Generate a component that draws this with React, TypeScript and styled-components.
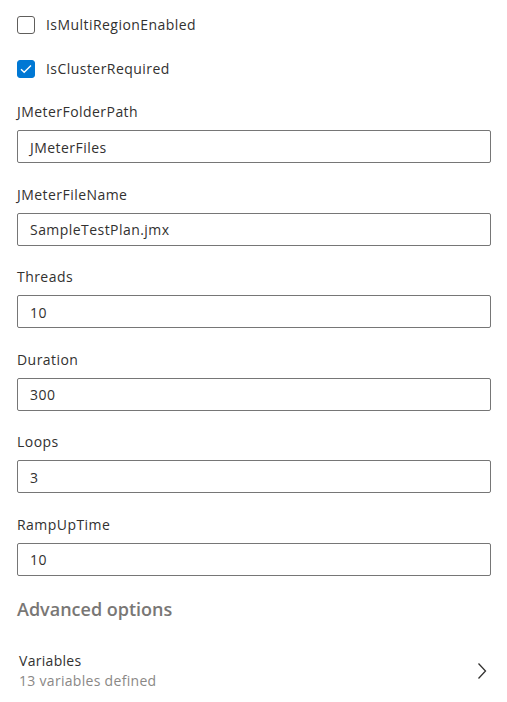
import React from "react";
import styled, { createGlobalStyle } from "styled-components";

const Global = createGlobalStyle`
  html, body { margin: 0; padding: 0; background: #fff; }
  body { font-family: "Segoe UI", "Open Sans", sans-serif; color: #323130; }
  * { box-sizing: border-box; }
`;

const Panel = styled.div`
  width: 507px;
  padding: 15px 16px 0 17px;
  display: flex;
  flex-direction: column;
`;

const Checks = styled.div`
  display: flex;
  flex-direction: column;
  gap: 24px;
  margin-bottom: 22px;
`;

const CheckRow = styled.label`
  display: flex;
  align-items: center;
  gap: 11px;
  height: 20px;
  font-size: 14px;
  line-height: 20px;
  letter-spacing: 0.45px;
`;

const Box = styled.span<{ $checked?: boolean }>`
  width: 18px;
  height: 18px;
  border-radius: 3px;
  border: 1px solid ${(p) => (p.$checked ? "#0078d4" : "#605e5c")};
  background: ${(p) => (p.$checked ? "#0078d4" : "#fff")};
  display: flex;
  align-items: center;
  justify-content: center;
  flex: none;
`;

const Field = styled.div`
  display: flex;
  flex-direction: column;
  margin-bottom: 20.5px;
`;

const Label = styled.div`
  font-size: 14px;
  line-height: 20px;
  padding-top: 1px;
  margin-bottom: 8px;
  letter-spacing: 0.45px;
`;

const Input = styled.div`
  height: 33px;
  border: 1px solid #767676;
  border-radius: 2px;
  padding: 1px 12px 0;
  font-size: 14px;
  letter-spacing: 0.45px;
  display: flex;
  align-items: center;
`;

const Section = styled.div`
  font-size: 18px;
  font-weight: 600;
  color: #797775;
  line-height: 24px;
  margin-top: 1px;
  margin-bottom: 29px;
`;

const VarRow = styled.div`
  display: flex;
  align-items: center;
  justify-content: space-between;
  padding: 1px 4px 0 2px;
  letter-spacing: 0.3px;
`;

const VarText = styled.div`
  display: flex;
  flex-direction: column;
`;

const VarTitle = styled.div`
  font-size: 14px;
  line-height: 20px;
`;

const VarSub = styled.div`
  font-size: 14px;
  line-height: 20px;
  color: #8a8886;
`;

const fields = [
  ["JMeterFolderPath", "JMeterFiles"],
  ["JMeterFileName", "SampleTestPlan.jmx"],
  ["Threads", "10"],
  ["Duration", "300"],
  ["Loops", "3"],
  ["RampUpTime", "10"],
];

export default function App() {
  return (
    <>
      <Global />
      <Panel>
        <Checks>
          <CheckRow>
            <Box />
            IsMultiRegionEnabled
          </CheckRow>
          <CheckRow>
            <Box $checked>
              <svg width="12" height="10" viewBox="0 0 12 10">
                <path d="M1 5.2 L4.2 8.3 L11 1.5" fill="none" stroke="#fff" strokeWidth="1.4" />
              </svg>
            </Box>
            IsClusterRequired
          </CheckRow>
        </Checks>
        {fields.map(([l, v]) => (
          <Field key={l}>
            <Label>{l}</Label>
            <Input>{v}</Input>
          </Field>
        ))}
        <Section>Advanced options</Section>
        <VarRow>
          <VarText>
            <VarTitle>Variables</VarTitle>
            <VarSub>13 variables defined</VarSub>
          </VarText>
          <svg width="10" height="18" viewBox="0 0 10 18">
            <path d="M1.5 1.5 L8.5 9 L1.5 16.5" fill="none" stroke="#323130" strokeWidth="1.3" />
          </svg>
        </VarRow>
      </Panel>
    </>
  );
}
